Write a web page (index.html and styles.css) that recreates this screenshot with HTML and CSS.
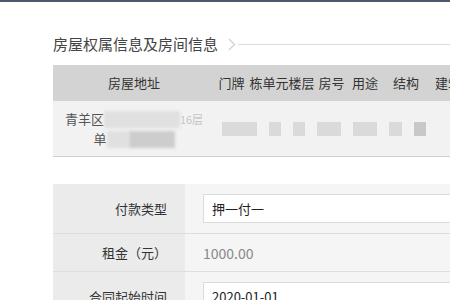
FILE: index.html
```html
<html>
    <head>
        <title>房屋权属信息</title>
        <link rel="stylesheet" href="styles.css">
    </head>
    <body>
        <div class="topbar"></div>
        <div class="page">
            <div class="section-title">
                <span>房屋权属信息及房间信息</span>
                <svg class="chevron" width="8" height="13" viewBox="0 0 8 13"><polyline points="1,1 6.5,6.5 1,12" fill="none" stroke="#d2d2d2" stroke-width="1.3"/></svg>
                <div class="title-line"></div>
            </div>

            <div class="house-table">
                <div class="house-head">
                    <div>房屋地址</div>
                    <div>门牌</div>
                    <div>栋单元楼层</div>
                    <div>房号</div>
                    <div>用途</div>
                    <div>结构</div>
                    <div>建筑面积</div>
                </div>
                <div class="house-row">
                    <div class="addr">
                        <div>青羊区<span class="blur blur-light w76"></span><span class="faint">16层</span></div>
                        <div>单<span class="blur blur-light w22"></span><span class="blur blur-dark w46"></span></div>
                    </div>
                    <div class="mosaic">
                        <span class="blk w35"></span>
                        <span class="blk w12"></span>
                        <span class="blk w12"></span>
                        <span class="blk w24"></span>
                        <span class="blk w24"></span>
                        <span class="blk w13"></span>
                        <span class="blk blk-dark w12"></span>
                    </div>
                </div>
            </div>

            <div class="form-table">
                <div class="form-row">
                    <div class="label">付款类型</div>
                    <div class="value"><div class="field">押一付一</div></div>
                </div>
                <div class="form-row">
                    <div class="label">租金（元）</div>
                    <div class="value"><span class="plain">1000.00</span></div>
                </div>
                <div class="form-row">
                    <div class="label">合同起始时间</div>
                    <div class="value"><div class="field">2020-01-01</div></div>
                </div>
            </div>
        </div>
    </body>
</html>
```

FILE: styles.css
```css
html, body {overflow: hidden;}

body {
        margin: 0;
        background: #fff;
        color: #333;
        font-family: "Noto Sans CJK SC", "Liberation Sans", sans-serif;
        font-size: 13px;}

.topbar {
        height: 2px;
        background: #4a5a6b;}

.page {
        padding-left: 53px;
        width: 520px;}

.section-title {
        display: flex;
        align-items: center;
        height: 20px;
        margin-top: 32px;
        font-size: 15px;
        line-height: 20px;
        color: #444;}

.chevron {margin-left: 10px;}

.title-line {
        flex: 1;
        height: 1px;
        margin-left: 2px;
        background: #dcdcdc;}

.house-table {margin-top: 11px;}

.house-head, .house-row {
        display: grid;
        grid-template-columns: 162px 33px 68px 31px 36px 46px 64px 1fr;
        text-align: center;}

.house-head {
        height: 36px;
        line-height: 36px;
        background: #d3d3d3;
        color: #333;
        white-space: nowrap;}

.house-row {
        height: 55px;
        align-items: center;
        background: #f3f2f3;
        border-bottom: 1px solid #cfcfcf;}

.addr {
        line-height: 19px;
        color: #555;
        white-space: nowrap;}

.blur {
        display: inline-block;
        height: 17px;
        vertical-align: middle;
        filter: blur(1.5px);}

.blur-light {background: #e0e0e0;}
.blur-dark {background: #cdcdcd;}

.faint {
        color: #c6c6c6;
        font-size: 11px;}

.mosaic {
        grid-column: 2 / -1;
        display: flex;
        align-items: center;
        padding-left: 7px;
        gap: 12px;}

.blk {
        display: block;
        height: 14px;
        background: #dadada;
        filter: blur(0.5px);}

.blk-dark {background: #c8c8c8;}

.w12 {width: 12px;}
.w13 {width: 13px;}
.w22 {width: 22px;}
.w24 {width: 24px;}
.w35 {width: 35px;}
.w46 {width: 46px;}
.w76 {width: 76px;}

.form-table {margin-top: 27px;}

.form-row {
        display: grid;
        grid-template-columns: 132px 1fr;
        border-bottom: 1px solid #dedede;}

.label {
        display: flex;
        align-items: center;
        justify-content: flex-end;
        padding-right: 18px;
        background: #ebebeb;
        color: #333;}

.value {
        display: flex;
        align-items: center;
        min-height: 37px;
        padding: 10px 0 10px 18px;
        box-sizing: border-box;
        background: #f6f5f6;}

.form-row:nth-child(2) .value {padding: 0 0 0 18px;}

.field {
        flex: 1;
        height: 29px;
        line-height: 27px;
        box-sizing: border-box;
        padding-left: 8px;
        background: #fff;
        border: 1px solid #dcdcdc;
        color: #222;}

.plain {
        color: #888;
        font-size: 14px;}
```
